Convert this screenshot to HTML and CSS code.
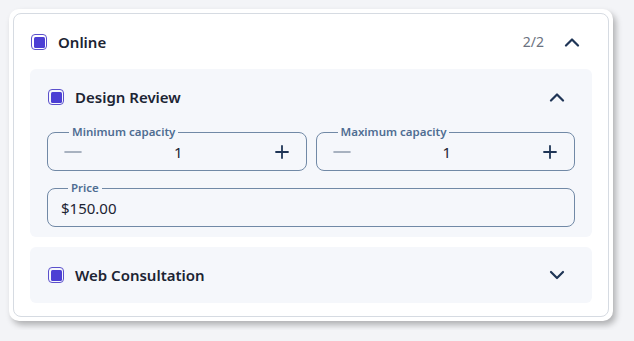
FILE: index.html
```html
<!DOCTYPE html>
<html lang="en">
<head>
    <meta charset="UTF-8">
    <meta name="viewport" content="width=device-width, initial-scale=1.0">
    <title>Online services</title>
    <link rel="stylesheet" href="styles.css">
</head>
<body>
    <div class="frame">
        <div class="card">
            <div class="card-header">
                <span class="checkbox"></span>
                <span class="card-title">Online</span>
                <span class="count">2/2</span>
                <svg class="chevron" width="16" height="10" viewBox="0 0 16 10">
                    <polyline points="2,8.5 8,2.5 14,8.5"></polyline>
                </svg>
            </div>

            <div class="panel">
                <div class="panel-header">
                    <span class="checkbox"></span>
                    <span class="panel-title">Design Review</span>
                    <svg class="chevron" width="16" height="10" viewBox="0 0 16 10">
                        <polyline points="2,8.5 8,2.5 14,8.5"></polyline>
                    </svg>
                </div>
                <div class="panel-body">
                    <div class="field-row">
                        <fieldset class="field stepper">
                            <legend>Minimum capacity</legend>
                            <svg class="step-icon minus" width="18" height="18" viewBox="0 0 18 18">
                                <line x1="1" y1="9" x2="17" y2="9"></line>
                            </svg>
                            <span class="step-value">1</span>
                            <svg class="step-icon plus" width="14" height="14" viewBox="0 0 14 14">
                                <line x1="1" y1="7" x2="13" y2="7"></line>
                                <line x1="7" y1="1" x2="7" y2="13"></line>
                            </svg>
                        </fieldset>
                        <fieldset class="field stepper">
                            <legend>Maximum capacity</legend>
                            <svg class="step-icon minus" width="18" height="18" viewBox="0 0 18 18">
                                <line x1="1" y1="9" x2="17" y2="9"></line>
                            </svg>
                            <span class="step-value">1</span>
                            <svg class="step-icon plus" width="14" height="14" viewBox="0 0 14 14">
                                <line x1="1" y1="7" x2="13" y2="7"></line>
                                <line x1="7" y1="1" x2="7" y2="13"></line>
                            </svg>
                        </fieldset>
                    </div>
                    <fieldset class="field price">
                        <legend>Price</legend>
                        <span class="price-value">$150.00</span>
                    </fieldset>
                </div>
            </div>

            <div class="panel">
                <div class="panel-header">
                    <span class="checkbox"></span>
                    <span class="panel-title">Web Consultation</span>
                    <svg class="chevron" width="16" height="10" viewBox="0 0 16 10">
                        <polyline points="2,2 8,8 14,2"></polyline>
                    </svg>
                </div>
            </div>
        </div>
    </div>
</body>
</html>
```

FILE: styles.css
```css
:root {
    --page-bg: #f3f4f7;
    --panel-bg: #f5f7fb;
    --card-border: #d6dbe2;
    --text-color: #1c2433;
    --muted-color: #6b7280;
    --field-border: #7189a6;
    --legend-color: #4f6d92;
    --icon-color: #1f3556;
    --check-color: #4c3fd4;
}

* {
    margin: 0;
    padding: 0;
    box-sizing: border-box;
    font-family: 'Segoe UI', 'Noto Sans', sans-serif;
}

body {
    background-color: var(--page-bg);
    color: var(--text-color);
    padding: 9px;
}

.frame {
    width: 604px;
    background-color: white;
    padding: 4px;
    border-radius: 10px;
    box-shadow: 3px 4px 6px rgba(0, 0, 0, 0.28);
}

.card {
    border: 1px solid var(--card-border);
    border-radius: 8px;
    padding: 0 16px 13px;
}

.card-header {
    display: flex;
    align-items: center;
    height: 55px;
    margin: 0 -16px;
    padding: 0 28px 0 17px;
}

.checkbox {
    width: 16px;
    height: 16px;
    border: 1.5px solid #5b50cc;
    border-radius: 4px;
    padding: 1.5px;
    background-color: var(--check-color);
    background-clip: content-box;
    flex-shrink: 0;
}

.card-title {
    margin-left: 11px;
    font-size: 15px;
    font-weight: 600;
    flex: 1;
}

.count {
    font-size: 14px;
    color: var(--muted-color);
    margin-right: 20px;
}

.chevron {
    fill: none;
    stroke: var(--icon-color);
    stroke-width: 2.2;
    stroke-linecap: round;
    stroke-linejoin: round;
}

.panel {
    background-color: var(--panel-bg);
    border-radius: 6px;
}

.panel + .panel {
    margin-top: 10px;
}

.panel-header {
    display: flex;
    align-items: center;
    height: 56px;
    padding: 0 27px 0 18px;
}

.panel-title {
    margin-left: 11px;
    font-size: 15px;
    font-weight: 600;
    flex: 1;
}

.panel-body {
    padding: 0 17px 10px;
}

.field-row {
    display: flex;
    gap: 9px;
}

.field {
    border: 1px solid var(--field-border);
    border-radius: 8px;
    min-width: 0;
}

.field legend {
    font-size: 11.5px;
    line-height: 14px;
    font-weight: 600;
    color: var(--legend-color);
    padding: 0 3px;
}

.stepper {
    flex: 1;
    display: flex;
    align-items: center;
    justify-content: space-between;
    height: 46px;
    padding: 0 17px 5px 16px;
}

.stepper legend {
    margin-left: 5px;
}

.step-icon {
    stroke-width: 1.6;
    stroke-linecap: round;
}

.minus {
    stroke: #8f9cad;
}

.plus {
    stroke: var(--icon-color);
    stroke-width: 1.8;
}

.step-value {
    font-size: 15px;
}

.price {
    margin-top: 10px;
    height: 46px;
    display: flex;
    align-items: center;
    padding: 0 13px 6px;
}

.price legend {
    margin-left: 7px;
}

.price-value {
    font-size: 15px;
}
```
